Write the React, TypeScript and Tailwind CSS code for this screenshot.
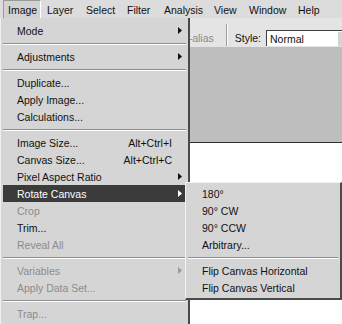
import React from 'react';

type Item = {
  label?: string;
  shortcut?: string;
  sub?: boolean;
  disabled?: boolean;
  active?: boolean;
  sep?: boolean;
};

const mainItems: Item[] = [
  { label: 'Mode', sub: true },
  { sep: true },
  { label: 'Adjustments', sub: true },
  { sep: true },
  { label: 'Duplicate...' },
  { label: 'Apply Image...' },
  { label: 'Calculations...' },
  { sep: true },
  { label: 'Image Size...', shortcut: 'Alt+Ctrl+I' },
  { label: 'Canvas Size...', shortcut: 'Alt+Ctrl+C' },
  { label: 'Pixel Aspect Ratio', sub: true },
  { label: 'Rotate Canvas', sub: true, active: true },
  { label: 'Crop', disabled: true },
  { label: 'Trim...' },
  { label: 'Reveal All', disabled: true },
  { sep: true },
  { label: 'Variables', sub: true, disabled: true },
  { label: 'Apply Data Set...', disabled: true },
  { sep: true },
  { label: 'Trap...', disabled: true },
];

const rotateItems: Item[] = [
  { label: '180°' },
  { label: '90° CW' },
  { label: '90° CCW' },
  { label: 'Arbitrary...' },
  { sep: true },
  { label: 'Flip Canvas Horizontal' },
  { label: 'Flip Canvas Vertical' },
];

const menuBar = [
  { label: 'Image', w: 'w-[38px] pl-[4px]' },
  { label: 'Layer', w: 'w-[39px] pl-[6px]' },
  { label: 'Select', w: 'w-[41px] pl-[6px]' },
  { label: 'Filter', w: 'w-[37px] pl-[6px]' },
  { label: 'Analysis', w: 'w-[50px] pl-[6px]' },
  { label: 'View', w: 'w-[35px] pl-[6px]' },
  { label: 'Window', w: 'w-[49px] pl-[6px]' },
  { label: 'Help', w: 'w-[40px] pl-[6px]' },
];

const Arrow = ({ color }: { color: string }) => (
  <svg width="4" height="7" viewBox="0 0 4 7">
    <polygon points="0,0 4,3.5 0,7" fill={color} />
  </svg>
);

const MenuRow = ({ item }: { item: Item }) => {
  if (item.sep) {
    return (
      <div className="h-[9px] pt-[4px]">
        <div className="h-px bg-[#8e8e8e]" />
        <div className="h-px bg-white" />
      </div>
    );
  }
  const text = item.active
    ? 'text-white'
    : item.disabled
      ? 'text-[#8c8c8c]'
      : 'text-[#111]';
  return (
    <div
      className={`flex h-[17px] items-center pl-[14px] pr-[4px] ${text} ${
        item.active ? 'bg-[#3b3b3b]' : ''
      }`}
    >
      <span className="flex-1 whitespace-nowrap pt-[2px]">{item.label}</span>
      {item.shortcut && (
        <span className="mr-[10px] whitespace-nowrap pt-[2px]">
          {item.shortcut}
        </span>
      )}
      {item.sub && (
        <Arrow
          color={item.active ? '#fff' : item.disabled ? '#9a9a9a' : '#111'}
        />
      )}
    </div>
  );
};

export default function App() {
  return (
    <div
      className="relative h-[324px] w-[342px] overflow-hidden bg-white text-[10.5px] leading-none"
      style={{ fontFamily: '"Liberation Sans", Arial, sans-serif' }}
    >
      {/* menu bar */}
      <div className="flex h-[18px] items-stretch bg-[#dcdcdc] text-[#111]">
        {menuBar.map((m, i) => (
          <div
            key={m.label}
            className={`flex shrink-0 items-center whitespace-nowrap pt-[2px] ${m.w} ${
              i === 0
                ? 'ml-[3px] border-l border-t border-r border-l-[#9a9a9a] border-t-[#9a9a9a] border-r-white bg-[#d2d2d2]'
                : ''
            }`}
          >
            {m.label}
          </div>
        ))}
      </div>

      {/* options bar */}
      <div className="flex h-[29px] items-end justify-end bg-[#e4e4e4] pb-px">
        <span className="h-[16px] whitespace-nowrap leading-[17px] text-[#8a8a8a]">
          Anti-alias
        </span>
        <div className="ml-[12px] flex h-[22px]">
          <div className="w-px bg-[#9a9a9a]" />
          <div className="w-px bg-white" />
        </div>
        <span className="ml-[7px] h-[16px] leading-[17px] text-[#111]">
          Style:
        </span>
        <div className="ml-[5px] flex h-[16px] w-[76px] shrink-0 border-l border-t border-l-[#404040] border-t-[#404040] bg-white">
          <span className="flex-1 pl-[3px] leading-[16px] text-[#111]">
            Normal
          </span>
          <div className="w-[5px] border-l border-t border-white bg-[#d4d4d4]" />
        </div>
      </div>

      {/* workspace */}
      <div className="h-[96px] border-b border-[#2e2e2e] bg-[#bebebe]" />

      {/* Image menu */}
      <div className="absolute left-0 top-[18px] h-[306px] w-[190px] border-l border-r-2 border-l-[#efefef] border-r-[#4a4a4a] bg-[#d5d5d5] px-[2px] pt-[4px]">
        {mainItems.map((item, i) => (
          <MenuRow key={i} item={item} />
        ))}
      </div>

      {/* Rotate Canvas submenu */}
      <div className="absolute left-[185px] top-[182px] w-[157px] border-l border-t border-r-2 border-b-2 border-l-[#f2f2f2] border-t-[#f2f2f2] border-r-[#4a4a4a] border-b-[#4a4a4a] bg-[#d5d5d5] px-[2px] py-[2px]">
        {rotateItems.map((item, i) => (
          <MenuRow key={i} item={item} />
        ))}
      </div>
    </div>
  );
}
